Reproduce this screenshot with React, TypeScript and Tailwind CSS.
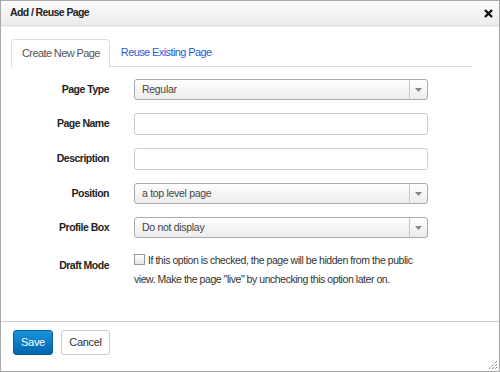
import React from 'react';

const SelectBox = ({ value }: { value: string }) => (
    <div className="flex h-[21px] w-[294px] items-stretch rounded-[3px] border border-[#aaa] bg-gradient-to-b from-white to-[#ececec]">
        <div className="flex flex-1 items-center pl-[7px] text-[10.5px] tracking-[-0.3px] text-[#444]">{value}</div>
        <div className="flex w-[18px] items-center justify-center border-l border-[#c8c8c8]">
            <svg width="7" height="4" viewBox="0 0 7 4">
                <path d="M0 0h7L3.5 4z" fill="#888" />
            </svg>
        </div>
    </div>
);

const TextBox = () => (
    <input
        type="text"
        className="h-[22px] w-[294px] rounded-[3px] border border-[#ccc] bg-white px-[6px] text-[11px] outline-none"
    />
);

const Label = ({ children }: { children: React.ReactNode }) => (
    <div className="flex h-[21px] items-center justify-end text-[10.5px] font-bold tracking-[-0.5px] text-[#222]">
        {children}
    </div>
);

export default function App() {
    return (
        <div
            className="flex h-[372px] w-[500px] flex-col border border-[#a8a8a8] bg-white"
            style={{ fontFamily: '"Liberation Sans", Arial, sans-serif' }}
        >
            {/* Header */}
            <div className="flex h-[25px] shrink-0 items-center justify-between border-b border-[#dcdcdc] bg-gradient-to-b from-[#fbfbfb] to-[#ececec] pl-[9px] pr-[6px] shadow-[0_1px_1px_rgba(0,0,0,0.05)]">
                <span className="text-[10.5px] font-bold tracking-[-0.6px] text-[#222]">Add / Reuse Page</span>
                <svg width="9" height="9" viewBox="0 0 9 9">
                    <path d="M1 1l7 7M8 1L1 8" stroke="#111" strokeWidth="2.4" />
                </svg>
            </div>

            {/* Body */}
            <div className="flex-1 pl-[10px] pr-[27px] pt-[13px]">
                <div className="flex h-[28px] items-end border-b border-[#ddd]">
                    <div className="-mb-px flex h-[28px] items-center rounded-t-[4px] border border-b-0 border-[#ddd] bg-white pl-[10px] pr-[9px] text-[11px] tracking-[-0.6px] text-[#555]">
                        Create New Page
                    </div>
                    <div className="flex h-[28px] items-center px-[11px] text-[11px] tracking-[-0.6px] text-[#2a5bd7]">
                        Reuse Existing Page
                    </div>
                </div>

                <div className="mt-[12px] grid grid-cols-[98px_294px] gap-x-[25px] gap-y-[13px]">
                    <Label>Page Type</Label>
                    <SelectBox value="Regular" />
                    <Label>Page Name</Label>
                    <TextBox />
                    <Label>Description</Label>
                    <TextBox />
                    <Label>Position</Label>
                    <SelectBox value="a top level page" />
                    <Label>Profile Box</Label>
                    <SelectBox value="Do not display" />
                    <div className="flex h-[30px] items-center justify-end text-[10.5px] font-bold tracking-[-0.5px] text-[#222]">
                        Draft Mode
                    </div>
                    <div className="w-[294px] text-[10.5px] leading-[19px] tracking-[-0.45px] text-[#333]">
                        <span className="mr-[3px] inline-block h-[11px] w-[11px] border border-[#999] bg-gradient-to-b from-white to-[#e4e4e4] align-[-1px]" />
                        If this option is checked, the page will be hidden from the public view. Make the page "live" by
                        unchecking this option later on.
                    </div>
                </div>
            </div>

            {/* Footer */}
            <div className="relative flex h-[50px] shrink-0 items-start gap-[8px] border-t border-[#ccc] pl-[12px] pt-[8px]">
                <button className="h-[25px] w-[40px] rounded-[3px] border border-[#0a5d99] bg-gradient-to-b from-[#1a94da] to-[#0066ad] text-[11px] tracking-[-0.3px] text-white">
                    Save
                </button>
                <button className="h-[25px] w-[49px] rounded-[3px] border border-[#ccc] bg-white text-[11px] tracking-[-0.3px] text-[#333]">
                    Cancel
                </button>
                <svg className="absolute bottom-[1px] right-[1px]" width="10" height="10" viewBox="0 0 10 10">
                    <path d="M9 1L1 9M9 4L4 9M9 7L7 9" stroke="#555" strokeWidth="1" strokeDasharray="1 1" />
                </svg>
            </div>
        </div>
    );
}
